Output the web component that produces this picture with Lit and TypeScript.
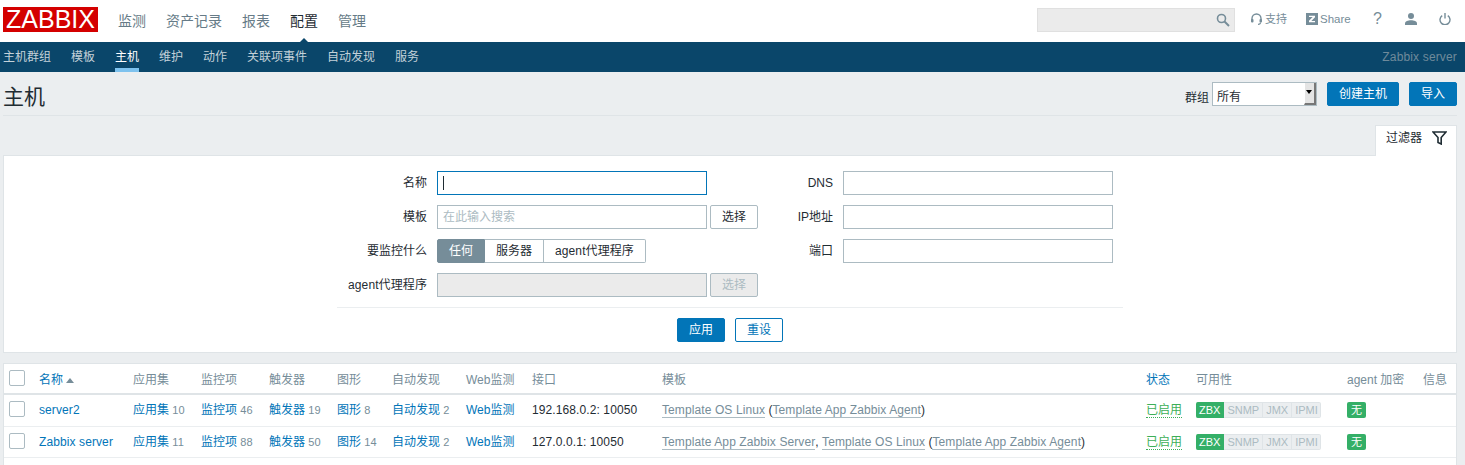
import { LitElement, html, css } from "lit";
import { customElement } from "lit/decorators.js";

const rows = [
  { name: "server2", c: [10, 46, 19, 8, 2], ip: "192.168.0.2: 10050", tpl: html`<span class="tl">Template OS Linux</span> (<span class="tl">Template App Zabbix Agent</span>)` },
  { name: "Zabbix server", c: [11, 88, 50, 14, 2], ip: "127.0.0.1: 10050", tpl: html`<span class="tl">Template App Zabbix Server</span>, <span class="tl">Template OS Linux</span> (<span class="tl">Template App Zabbix Agent</span>)` },
];

@customElement("app-root")
export class AppRoot extends LitElement {
  static styles = css`
    :host { display: block; height: 465px; overflow: hidden; background: #ebeef0; color: #1f2c33;
      font: 12px/14px "Liberation Sans", "Noto Sans CJK SC", sans-serif; }
    * { box-sizing: border-box; }
    .top { height: 42px; background: #fff; display: flex; align-items: center; padding: 0 8px 0 3px; }
    .logo { width: 95px; height: 25px; background: #d40000; color: #fff; font-size: 25px; line-height: 25px; text-align: center; margin-bottom: 3px; white-space: nowrap; }
    .mainnav { display: flex; gap: 20px; margin-left: 20px; font-size: 14px; color: #667b87; margin-bottom: 1px; }
    .mainnav .on { color: #1f2c33; position: relative; }
    .arrow { position: absolute; left: 50%; top: 24px; margin-left: -8px; width: 0; height: 0; border: 8px solid transparent; border-top: 0; border-bottom-color: #0a466a; }
    .spacer { flex: 1; }
    .search { width: 198px; height: 24px; background: #ebebeb; border: 1px solid #e0e0e0; display: flex; align-items: center; justify-content: flex-end; padding-right: 4px; margin-bottom: 2px; }
    .tools { display: flex; align-items: center; margin-left: 15px; color: #768d99; font-size: 11px; margin-bottom: 4px; }
    .tools svg { display: block; }
    .tool { display: flex; align-items: center; gap: 3px; }
    .share { font-size: 11.5px; }
    .help { font-size: 16px; line-height: 16px; }
    .t1 { width: 56px; padding-left: 1px; } .t2 { width: 67px; gap: 2px; } .t3 { width: 32px; } .t4 { width: 34px; } .t5 { width: 18px; }
    .sub { height: 30px; background: #0a466a; display: flex; padding: 0 8px 0 3px; gap: 20px; color: #c3d1d9; align-items: stretch; }
    .sub span { line-height: 31px; }
    .sub .on { color: #fff; border-bottom: 4px solid #7ec2ee; }
    .sub .srv { margin-left: auto; color: #6f8a9b; letter-spacing: 0.15px; }
    .head { height: 44px; margin: 0 8px 0 3px; border-bottom: 1px solid #dfe4e7; display: flex; align-items: flex-start; padding-top: 10px; }
    h1 { margin: 2px 0 0 0; font-size: 21px; font-weight: normal; line-height: 26px; flex: 1; }
    .glabel { margin: 9px 3px 0 0; color: #1f2c33; }
    .select { width: 105px; height: 24px; border: 1px solid #acbbc2; background: #fff; position: relative; padding: 7px 0 0 4px; line-height: 14px; }
    .select i { position: absolute; right: 0; top: 0; bottom: 0; width: 12px; background: #e4e4e4; border-right: 2px solid #777; border-bottom: 2px solid #777; border-left: 1px solid #fff; }
    .select i::after { content: ""; position: absolute; left: 1px; top: 7px; border: 3px solid transparent; border-top: 4px solid #000; border-bottom: 0; }
    .btn { height: 24px; border-radius: 2px; background: #0275b8; border: 1px solid #0275b8; color: #fff; display: flex; align-items: center; justify-content: center; }
    .b1 { width: 72px; margin-left: 10px; } .b2 { width: 48px; margin-left: 10px; }
    .tabrow { display: flex; justify-content: flex-end; padding: 9px 8px 0 0; height: 40px; margin-bottom: -1px; position: relative; }
    .tab { width: 82px; height: 31px; background: #fff; border: 1px solid #dfe4e7; border-bottom: 0; display: flex; align-items: center; padding: 0 0 6px 10px; gap: 10px; }
    .filter { margin: 0 8px 0 3px; height: 198px; background: #fff; border: 1px solid #dfe4e7; padding-top: 15px; }
    .fwrap { width: 786px; margin: 0 auto; }
    .cols { display: flex; height: 137px; border-bottom: 1px solid #ebeef0; }
    .colL { width: 436px; } .colR { flex: 1; }
    .fr { display: flex; height: 34px; align-items: flex-start; }
    .lab { height: 24px; line-height: 24px; text-align: right; }
    .lat { letter-spacing: 0.1px; }
    .colL .lab { width: 90px; margin-right: 10px; }
    .colR .lab { width: 60px; margin-right: 10px; }
    .inp { width: 270px; height: 24px; border: 1px solid #acbbc2; background: #fff; padding: 0 5px; line-height: 22px; }
    .inp.focus { border-color: #0275b8; border-radius: 0; }
    .caret { display: inline-block; width: 1px; height: 14px; background: #1f2c33; vertical-align: -3px; }
    .ph { color: #acbbc2; }
    .inp.dis { background: #ebebeb; }
    .sel { margin-left: 3px; width: 48px; height: 24px; border: 1px solid #acbbc2; border-radius: 2px; background: #fff; display: flex; align-items: center; justify-content: center; }
    .sel.dis { background: #ebebeb; color: #acbbc2; }
    .seg { display: flex; height: 24px; }
    .seg span { border: 1px solid #acbbc2; border-left: 0; padding: 0 11px; line-height: 22px; background: #fff; }
    .seg span:first-child { background: #768d99; border: 1px solid #768d99; padding: 0 11px; color: #fff; border-radius: 2px 0 0 2px; }
    .seg span:last-child { border-radius: 0 2px 2px 0; letter-spacing: 0.1px; }
    .actions { display: flex; justify-content: center; gap: 10px; padding-top: 10px; }
    .actions > div { width: 48px; }
    .ghost { background: #fff; border-color: #0275b8; color: #0275b8; }
    .table { margin: 10px 8px 0 3px; background: #fff; border: 1px solid #dfe4e7; border-bottom: 0; height: 110px; }
    .tr { display: grid; grid-template-columns: 35px 94px 68px 68px 68px 55px 74px 66px 130px 484px 50px 151px 76px 1fr; align-items: start; border-bottom: 1px solid #ebeef0; padding-top: 8px; height: 32px; white-space: nowrap; }
    .tr.h { height: 31px; padding-top: 9px; border-bottom: 2px solid #dfe4e7; color: #768d99; }
    .tr + .tr + .tr { height: 31px; }
    .l { color: #0275b8; }
    .cb { display: block; width: 16px; height: 16px; border: 1px solid #acbbc2; border-radius: 2px; margin: -2px 0 0 5px; background: #fff; }
    .h .cb { margin-top: -3px; }
    .sort { display: inline-block; border: 4px solid transparent; border-top: 0; border-bottom: 5px solid #768d99; margin-left: 3px; vertical-align: 1px; }
    .n { color: #768d99; font-size: 11px; }
    .tl { border-bottom: 1px solid #acbbc2; color: #768d99; letter-spacing: 0.1px; }
    .ip, .nm { letter-spacing: 0.1px; }
    .en { color: #3daf58; border-bottom: 1px dotted #3daf58; line-height: 14px; display: inline-block; }
    .avail { display: flex; width: max-content; height: 16px; font-size: 11px; line-height: 14px; margin-top: -1px; }
    .avail span { padding: 0 3px; background: #ebeef0; border: 1px solid #dfe4e7; border-left: 0; color: #acbbc2; }
    .avail span:first-child { background: #34af67; border-color: #34af67; color: #fff; border-radius: 2px 0 0 2px; }
    .avail span:last-child { border-radius: 0 2px 2px 0; padding-right: 2px; }
    .none { display: block; width: 19px; height: 16px; margin-top: -1px; background: #34af67; color: #fff; border-radius: 2px; text-align: center; font-size: 11px; line-height: 16px; }
  `;

  render() {
    return html`
      <div class="top">
        <div class="logo">ZABBIX</div>
        <div class="mainnav"><span>监测</span><span>资产记录</span><span>报表</span><span class="on">配置<i class="arrow"></i></span><span>管理</span></div>
        <div class="spacer"></div>
        <div class="search"><svg width="14" height="14" viewBox="0 0 14 14" fill="none" stroke="#768d99" stroke-width="1.6"><circle cx="5.5" cy="5.5" r="4"/><path d="M8.5 8.5L13 13" stroke-width="2"/></svg></div>
        <div class="tools">
          <div class="tool t1"><svg width="11" height="12" viewBox="0 0 11 12" fill="none" stroke="#768d99" stroke-width="1.4"><path d="M1 8V5.500a4.500 4.500 0 019 0V8"/><rect x="0" y="6" width="2.500" height="3.500" rx="1" fill="#768d99" stroke="none"/><rect x="8.500" y="6" width="2.500" height="3.500" rx="1" fill="#768d99" stroke="none"/><path d="M9.500 9.500q0 1.800-2.500 1.800" stroke-width="1.200"/></svg><span>支持</span></div>
          <div class="tool t2"><svg width="12" height="12" viewBox="0 0 12 12"><rect width="12" height="12" fill="#768d99"/><path d="M3 2.800h6v1.500L5.300 8H9v1.300H3V7.800L6.700 4.100H3z" fill="#fff"/></svg><span class="share">Share</span></div>
          <div class="tool t3"><span class="help">?</span></div>
          <div class="tool t4"><svg width="12" height="12" viewBox="0 0 12 12" fill="#768d99"><circle cx="6" cy="3" r="3"/><path d="M0 12V10.500C0 8.500 3 7.300 6 7.300s6 1.200 6 3.200V12z"/></svg></div>
          <div class="tool t5"><svg width="12" height="12" viewBox="0 0 12 12" fill="none" stroke="#768d99" stroke-width="1.4"><path d="M3.200 2.600a5 5 0 105.600 0"/><path d="M6 0v5.500"/></svg></div>
        </div>
      </div>
      <div class="sub"><span>主机群组</span><span>模板</span><span class="on">主机</span><span>维护</span><span>动作</span><span>关联项事件</span><span>自动发现</span><span>服务</span><span class="srv">Zabbix server</span></div>
      <div class="head">
        <h1>主机</h1>
        <span class="glabel">群组</span>
        <div class="select">所有<i></i></div>
        <div class="btn b1">创建主机</div>
        <div class="btn b2">导入</div>
      </div>
      <div class="tabrow"><div class="tab">过滤器<svg width="15" height="14" viewBox="0 0 15 14" fill="none" stroke="#1f2c33" stroke-width="1.6"><path d="M1 1h13L9.200 6.500V13L6 11.500V6.500z"/></svg></div></div>
      <div class="filter">
        <div class="fwrap">
          <div class="cols">
            <div class="colL">
              <div class="fr"><div class="lab">名称</div><div class="inp focus"><span class="caret"></span></div></div>
              <div class="fr"><div class="lab">模板</div><div class="inp ph">在此输入搜索</div><div class="sel">选择</div></div>
              <div class="fr"><div class="lab">要监控什么</div><div class="seg"><span>任何</span><span>服务器</span><span>agent代理程序</span></div></div>
              <div class="fr"><div class="lab lat">agent代理程序</div><div class="inp dis"></div><div class="sel dis">选择</div></div>
            </div>
            <div class="colR">
              <div class="fr"><div class="lab">DNS</div><div class="inp"></div></div>
              <div class="fr"><div class="lab">IP地址</div><div class="inp"></div></div>
              <div class="fr"><div class="lab">端口</div><div class="inp"></div></div>
            </div>
          </div>
          <div class="actions"><div class="btn">应用</div><div class="btn ghost">重设</div></div>
        </div>
      </div>
      <div class="table">
        <div class="tr h"><span><i class="cb"></i></span><span class="l">名称<i class="sort"></i></span><span>应用集</span><span>监控项</span><span>触发器</span><span>图形</span><span>自动发现</span><span>Web监测</span><span>接口</span><span>模板</span><span class="l">状态</span><span>可用性</span><span>agent 加密</span><span>信息</span></div>
        ${rows.map((r) => html`
          <div class="tr">
            <span><i class="cb"></i></span><span class="l nm">${r.name}</span>
            <span><span class="l">应用集</span> <span class="n">${r.c[0]}</span></span>
            <span><span class="l">监控项</span> <span class="n">${r.c[1]}</span></span>
            <span><span class="l">触发器</span> <span class="n">${r.c[2]}</span></span>
            <span><span class="l">图形</span> <span class="n">${r.c[3]}</span></span>
            <span><span class="l">自动发现</span> <span class="n">${r.c[4]}</span></span>
            <span class="l">Web监测</span>
            <span class="ip">${r.ip}</span>
            <span>${r.tpl}</span>
            <span><span class="en">已启用</span></span>
            <span class="avail"><span>ZBX</span><span>SNMP</span><span>JMX</span><span>IPMI</span></span>
            <span><span class="none">无</span></span>
            <span></span>
          </div>`)}
      </div>
    `;
  }
}
